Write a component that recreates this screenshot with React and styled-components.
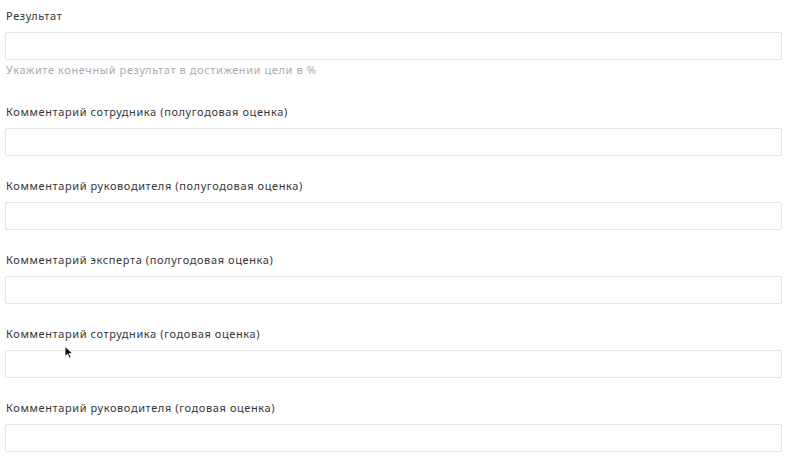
import React from 'react';
import styled, { createGlobalStyle } from 'styled-components';

const GlobalStyle = createGlobalStyle`
    html, body {
        margin: 0;
        padding: 0;
        background: #ffffff;
    }
    body {
        font-family: "Noto Sans", "Liberation Sans", Arial, sans-serif;
        -webkit-font-smoothing: antialiased;
    }
`;

const Form = styled.div`
    /* 폼 전체 */
    position: relative;
    display: flex;
    flex-direction: column;
    gap: 23px;
    padding: 9px 7px 0 5px;
    width: 789px;
    height: 462px;
    box-sizing: border-box;
    overflow: hidden;
`;

const Field = styled.div`
    display: flex;
    flex-direction: column;
`;

const Label = styled.label`
    font-size: 11px;
    line-height: 14px;
    color: #363636;
    padding-left: 1px;
    margin-bottom: 9px;
    letter-spacing: 0.6px;
`;

const Input = styled.input`
    height: 28px;
    box-sizing: border-box;
    border: 1px solid #e4e4e4;
    border-radius: 2px;
    background: #ffffff;
    outline: none;
    font: inherit;
    font-size: 11px;
    padding: 0 8px;
`;

const Hint = styled.p`
    margin: 4px 0 6px;
    padding-left: 1px;
    font-size: 11px;
    line-height: 12px;
    color: #ababab;
    letter-spacing: 0.6px;
`;

const Cursor = styled.svg`
    position: absolute;
    left: 64px;
    top: 345px;
    width: 10px;
    height: 15px;
`;

const fields = [
    { label: 'Результат', hint: 'Укажите конечный результат в достижении цели в %' },
    { label: 'Комментарий сотрудника (полугодовая оценка)' },
    { label: 'Комментарий руководителя (полугодовая оценка)' },
    { label: 'Комментарий эксперта (полугодовая оценка)' },
    { label: 'Комментарий сотрудника (годовая оценка)' },
    { label: 'Комментарий руководителя (годовая оценка)' },
];

function App() {
    return (
        <>
            <GlobalStyle />
            <Form>
                {fields.map((f) => (
                    <Field key={f.label}>
                        <Label>{f.label}</Label>
                        <Input type="text" />
                        {f.hint && <Hint>{f.hint}</Hint>}
                    </Field>
                ))}
                <Cursor viewBox="0 0 10 14">
                    <path d="M1 1 L1 11 L3.5 8.6 L5.4 12.8 L7 12.1 L5.2 8 L8.6 8 Z" fill="#111" stroke="#fff" strokeWidth="0.8" />
                </Cursor>
            </Form>
        </>
    );
}

export default App;
